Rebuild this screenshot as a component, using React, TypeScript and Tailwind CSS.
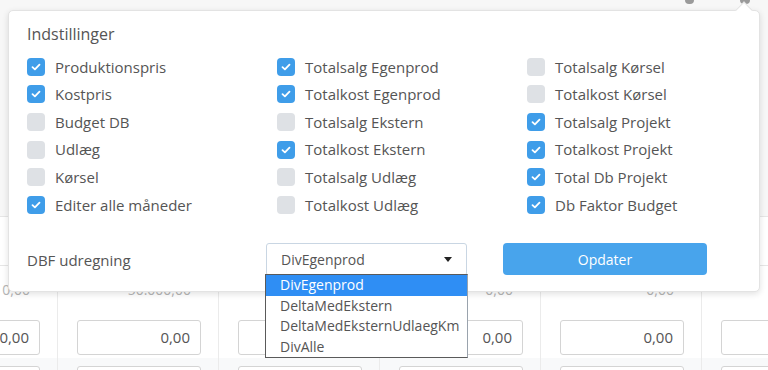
import React from 'react';

const columns = [
  [
    { label: 'Produktionspris', checked: true },
    { label: 'Kostpris', checked: true },
    { label: 'Budget DB', checked: false },
    { label: 'Udlæg', checked: false },
    { label: 'Kørsel', checked: false },
    { label: 'Editer alle måneder', checked: true },
  ],
  [
    { label: 'Totalsalg Egenprod', checked: true },
    { label: 'Totalkost Egenprod', checked: true },
    { label: 'Totalsalg Ekstern', checked: false },
    { label: 'Totalkost Ekstern', checked: true },
    { label: 'Totalsalg Udlæg', checked: false },
    { label: 'Totalkost Udlæg', checked: false },
  ],
  [
    { label: 'Totalsalg Kørsel', checked: false },
    { label: 'Totalkost Kørsel', checked: false },
    { label: 'Totalsalg Projekt', checked: true },
    { label: 'Totalkost Projekt', checked: true },
    { label: 'Total Db Projekt', checked: true },
    { label: 'Db Faktor Budget', checked: true },
  ],
];

// baggrundstabellen bag popoveren
const cells = [
  { header: '0,00', value: '0,00' },
  { header: '50.000,00', value: '0,00' },
  { header: '', value: '' },
  { header: '0,00', value: '0,00' },
  { header: '0,00', value: '0,00' },
  { header: '', value: '' },
];
const options = ['DivEgenprod', 'DeltaMedEkstern', 'DeltaMedEksternUdlaegKm', 'DivAlle'];

function Checkbox({ checked }: { checked: boolean }) {
  return (
    <span
      className={
        'flex h-[18px] w-[18px] shrink-0 items-center justify-center rounded-[4px] ' +
        (checked ? 'bg-[#3f9de9]' : 'bg-[#dee1e5]')
      }
    >
      {checked && (
        <svg width="10" height="8" viewBox="0 0 10 8" fill="none">
          <path d="M1.5 4.2 L3.9 6.4 L8.5 1.6" stroke="white" strokeWidth="1.8" strokeLinecap="round" strokeLinejoin="round" />
        </svg>
      )}
    </span>
  );
}

export default function App() {
  return (
    <div
      className="relative h-[370px] w-[768px] overflow-hidden bg-white text-[#555]"
      style={{ fontFamily: '"Open Sans", sans-serif' }}
    >
      {/* Page behind */}
      <div className="flex h-[217px] items-start justify-end gap-[46px] border-b border-[#e6e6e6] bg-[#f7f7f7] pr-[18px]">
        <span className="mt-[-4px] h-[8px] w-[9px] rounded-full bg-[#9a9a9a]" />
        <span className="mt-[-4px] h-[8px] w-[10px] rounded-full bg-[#9a9a9a]" />
      </div>
      <div className="h-[49px] border-b border-[#e6e6e6] bg-white" />
      <div className="ml-[-103px] flex">
        {cells.map((c, i) => (
          <div key={i} className="w-[161px] shrink-0 border-r border-[#ebebeb]">
            <div className="flex h-[92px] flex-col pl-[19px] pr-[17px]">
              <div className="h-[42px] pr-[10px] pt-[14px] text-right text-[14px] leading-[20px] text-[#b5b5b5]">{c.header}</div>
              <div className="mt-[12px] flex h-[35px] items-center justify-end rounded-[3px] border border-[#d4d4d4] bg-white pr-[10px] text-[15px]">
                {c.value}
              </div>
            </div>
            <div className="h-[20px] bg-[#f8f9fa] pl-[19px] pr-[17px] pt-[8px]">
              <div className="h-[20px] rounded-t-[3px] border border-[#d4d4d4] bg-white" />
            </div>
          </div>
        ))}
      </div>

      {/* Settings popover */}
      <div className="absolute left-[8px] top-[10px] h-[282px] w-[752px] rounded-[5px] border border-[#e3e3e3] bg-white px-[18px] pt-[12px] shadow-[0_2px_6px_rgba(0,0,0,0.12)]">
        <div className="absolute right-[9px] top-[-7px] h-[12px] w-[12px] rotate-45 border-l border-t border-[#e3e3e3] bg-white" />
        <div className="h-[22px] text-[16px] leading-[22px]">Indstillinger</div>
        <div className="mt-[8px] grid grid-cols-[250px_250px_250px]">
          {columns.map((col, ci) => (
            <div key={ci} className="flex flex-col">
              {col.map((item) => (
                <div key={item.label} className="flex h-[27.6px] items-center gap-[10px] text-[15px]">
                  <Checkbox checked={item.checked} />
                  <span>{item.label}</span>
                </div>
              ))}
            </div>
          ))}
        </div>
        <div className="mt-[24px] flex h-[33px] items-center">
          <div className="w-[239px] pt-[2px] text-[15px]">DBF udregning</div>
          <div className="flex h-[33px] w-[201px] items-center justify-between rounded-[3px] border border-[#c9d6e3] pl-[14px] pr-[14px] text-[14px]">
            <span>DivEgenprod</span>
            <svg width="8" height="5" viewBox="0 0 8 5">
              <path d="M0 0 L8 0 L4 5 Z" fill="#222" />
            </svg>
          </div>
          <button className="ml-[36px] h-[32px] w-[204px] rounded-[4px] bg-[#48a4ec] text-[14px] text-white">
            Opdater
          </button>
        </div>
      </div>

      {/* Open select list */}
      <div className="absolute left-[265px] top-[274px] w-[203px] border border-[#5a5a5a] border-r-[#9aa3ad] bg-white text-[14px] leading-[20.5px]">
        {options.map((o, i) => (
          <div key={o} className={'pl-[14px] ' + (i === 0 ? 'bg-[#2f8ef4] text-white' : 'text-[#555]')}>
            {o}
          </div>
        ))}
      </div>
    </div>
  );
}
